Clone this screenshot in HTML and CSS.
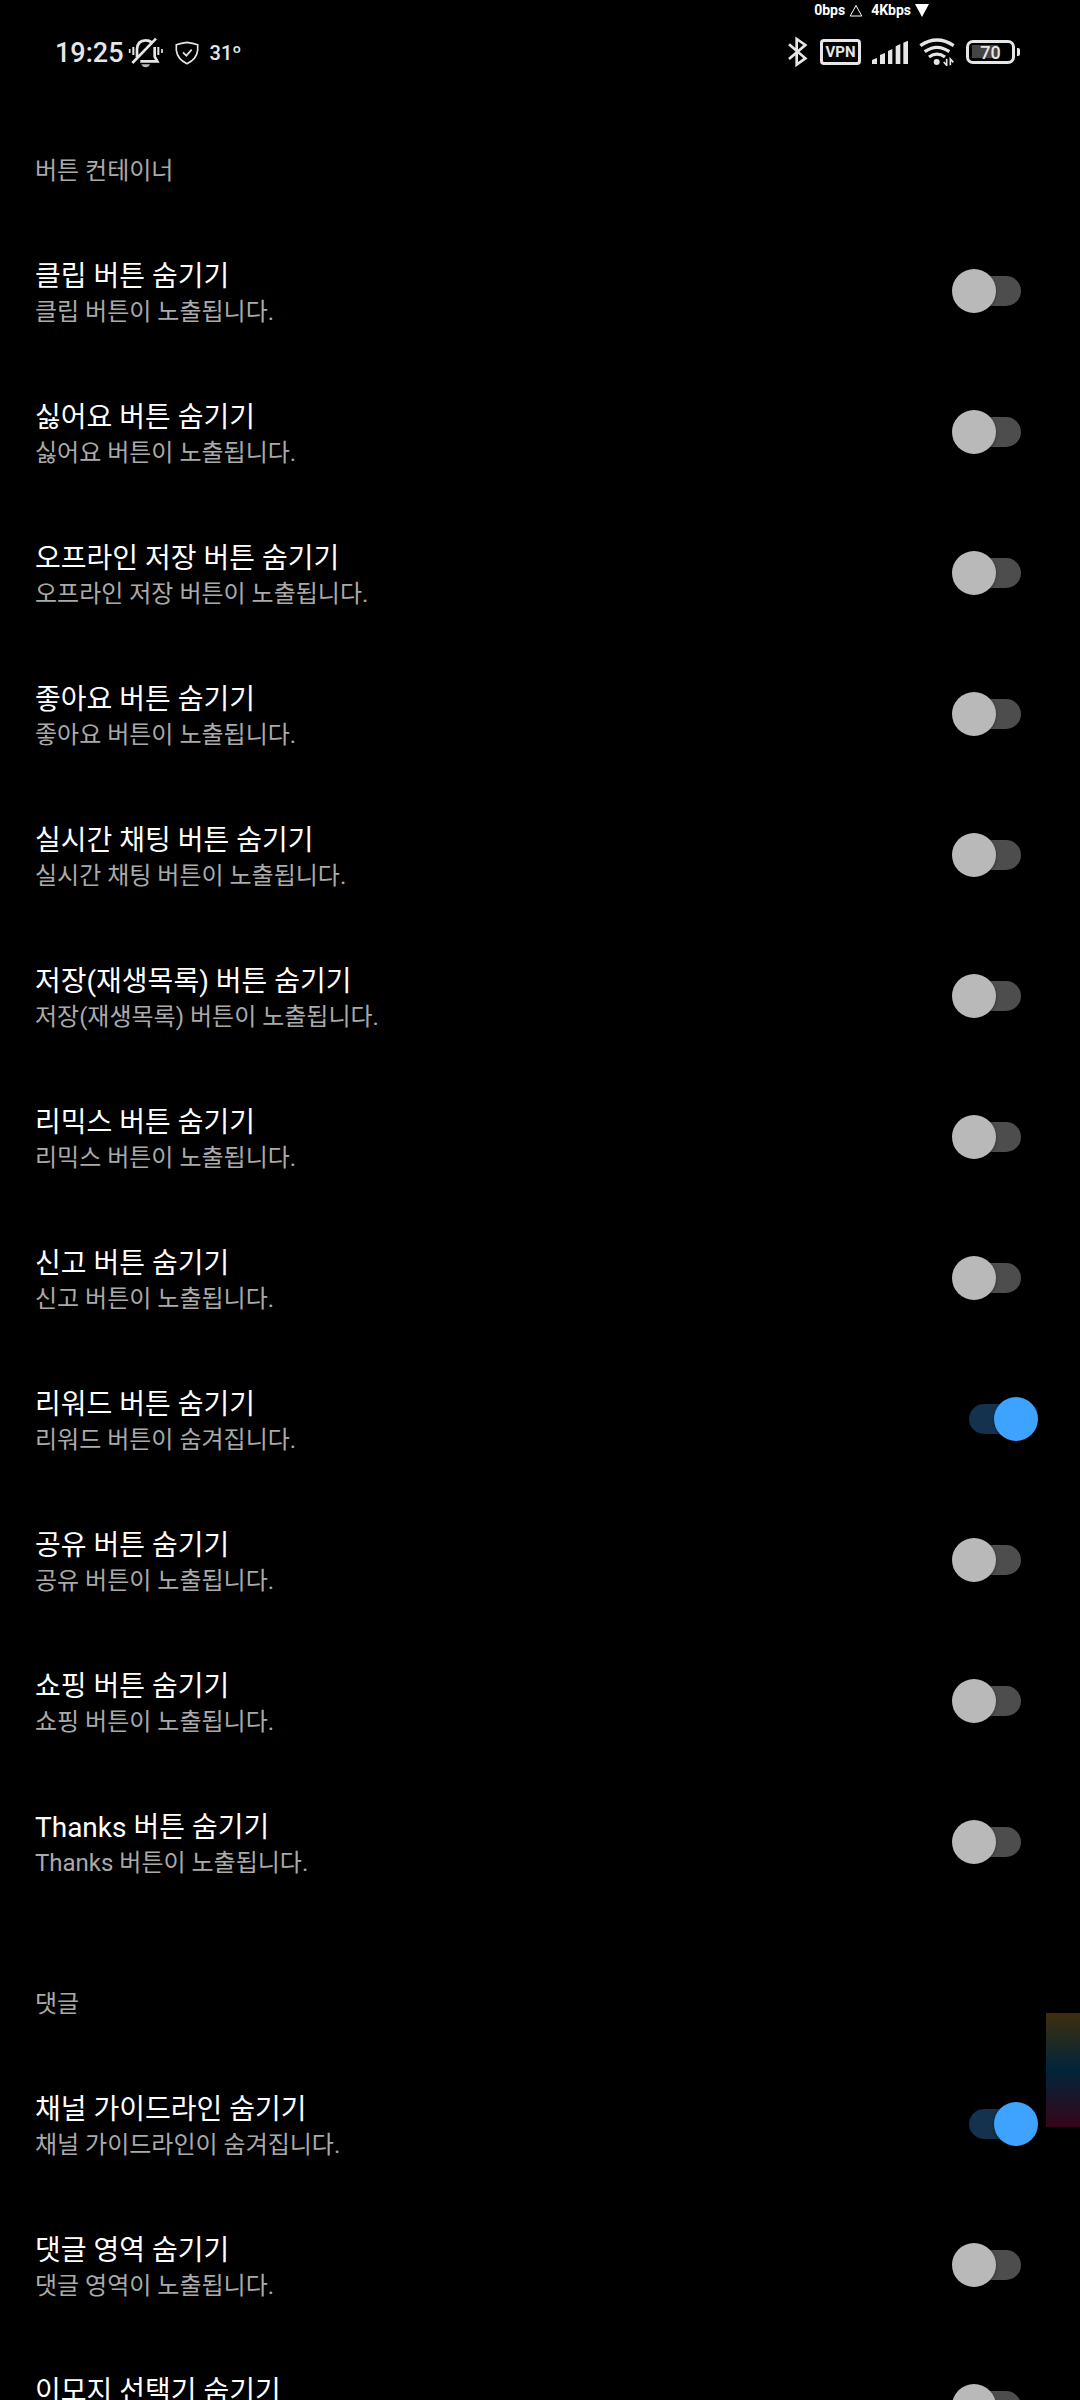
FILE: index.html
```
<!DOCTYPE html>
<html lang="ko">
<head>
    <meta charset="UTF-8">
    <meta name="viewport" content="width=device-width, initial-scale=1.0">
    <title>버튼 컨테이너</title>
    <link rel="stylesheet" href="styles.css">
</head>
<body>
<header class="statusbar">
    <div class="netspeed">
        <span>0bps</span>
        <svg width="14" height="13" viewBox="0 0 14 13"><path d="M7 1.5 12.8 12H1.2Z" fill="none" stroke="#fff"/></svg>
        <span class="down">4Kbps</span>
        <svg width="14" height="13" viewBox="0 0 14 13"><path d="M0 0h14L7 13Z" fill="#fff"/></svg>
    </div>
    <div class="status-row">
        <div class="status-left">
            <span class="clock">19:25</span>
            <!-- muted bell -->
            <svg width="36" height="32" viewBox="262 50 108 96" fill="none" stroke="#e6e6e6" stroke-width="8">
                <path d="M289 110V87Q290 60 315 60Q326 60 333 66M342 80V109L350 123H299M275 128 346 55"/>
                <path d="M278 80V104M353 80V104" stroke-width="6"/>
                <path d="M267 86V98M364 86V98" stroke-width="5"/>
                <path d="M302 132H328Q324 141 315 141Q306 141 302 132Z" fill="#bbb" stroke="none"/>
            </svg>
            <svg class="shield" width="26" height="28" viewBox="402 54 78 84" fill="none" stroke="#e6e6e6" stroke-width="5">
                <path d="M441 64Q458 66 473 71V88Q470 114 441 128Q412 114 409 88V71Q424 66 441 64Z"/>
                <path d="M429 94 439 104 455 86"/>
            </svg>
            <span class="temp">31º</span>
        </div>
        <div class="status-right">
            <!-- bluetooth -->
            <svg width="22" height="32" viewBox="54 108 66 96" fill="none" stroke="#e6e6e6" stroke-width="8">
                <path d="M60 133 109 175 83 194V117L109 135 60 177"/>
            </svg>
            <span class="vpn">VPN</span>
            <!-- signal -->
            <svg width="36" height="24" viewBox="306 120 108 72" fill="#e6e6e6">
                <path d="M306 192V180L321 174V192ZM330 192V165L345 159V192ZM354 192V153L367 147V192ZM377 192V139L391 132V192ZM400 192V128L414 122V192Z"/>
            </svg>
            <!-- wifi -->
            <svg width="36" height="28" viewBox="444 114 108 84" fill="none" stroke="#e6e6e6" stroke-width="10">
                <path d="M448 137Q498 103 548 137M461 155Q498 129 535 155M474 171Q498 154 522 171"/>
                <circle cx="497" cy="186" r="9" fill="#e6e6e6" stroke="none"/>
                <path d="M527 176V196L518 186M538 196V177L547 187" stroke-width="5"/>
            </svg>
            <span class="battery"><span class="battery-body">70</span></span>
        </div>
    </div>
</header>
<main id="settings"></main>
<div class="edge-strip"></div>
<script>
    const sections = [
        {
            name: "버튼 컨테이너",
            items: [
                ["클립 버튼 숨기기", "클립 버튼이 노출됩니다."],
                ["싫어요 버튼 숨기기", "싫어요 버튼이 노출됩니다."],
                ["오프라인 저장 버튼 숨기기", "오프라인 저장 버튼이 노출됩니다."],
                ["좋아요 버튼 숨기기", "좋아요 버튼이 노출됩니다."],
                ["실시간 채팅 버튼 숨기기", "실시간 채팅 버튼이 노출됩니다."],
                ["저장(재생목록) 버튼 숨기기", "저장(재생목록) 버튼이 노출됩니다."],
                ["리믹스 버튼 숨기기", "리믹스 버튼이 노출됩니다."],
                ["신고 버튼 숨기기", "신고 버튼이 노출됩니다."],
                ["리워드 버튼 숨기기", "리워드 버튼이 숨겨집니다.", true],
                ["공유 버튼 숨기기", "공유 버튼이 노출됩니다."],
                ["쇼핑 버튼 숨기기", "쇼핑 버튼이 노출됩니다."],
                ["Thanks 버튼 숨기기", "Thanks 버튼이 노출됩니다."]
            ]
        },
        {
            name: "댓글",
            items: [
                ["채널 가이드라인 숨기기", "채널 가이드라인이 숨겨집니다.", true],
                ["댓글 영역 숨기기", "댓글 영역이 노출됩니다."],
                ["이모지 선택기 숨기기", ""]
            ]
        }
    ];

    document.getElementById("settings").innerHTML = sections.map(section => `
        <section>
            <h2 class="category">${section.name}</h2>
            ${section.items.map(([title, summary, on]) => `
            <label class="setting">
                <span class="setting-text">
                    <span class="title">${title}</span>
                    <span class="summary">${summary}</span>
                </span>
                <input type="checkbox" role="switch" class="switch" ${on ? "checked" : ""}>
            </label>`).join("")}
        </section>`).join("");
</script>
</body>
</html>
```
FILE: styles.css
```
* {
    box-sizing: border-box;
}

body {
    margin: 0;
    height: 100vh;
    overflow: hidden;
    background-color: #000;
    color: #fff;
    font-family: Roboto, "Noto Sans CJK KR", sans-serif;
}

svg {
    display: block;
}

.netspeed {
    display: flex;
    justify-content: flex-end;
    align-items: center;
    gap: 4px;
    height: 24px;
    padding: 0 151px 4px 0;
    font-size: 14px;
    font-weight: 700;
    line-height: 20px;
}

.netspeed .down {
    margin-left: 4px;
}

.status-row {
    display: flex;
    justify-content: space-between;
    align-items: center;
    height: 55px;
    padding: 0 60px 0 55px;
    color: #e6e6e6;
}

.status-left {
    display: flex;
    align-items: center;
    gap: 4px;
    padding-top: 2px;
}

.status-right {
    display: flex;
    align-items: center;
    gap: 11px;
}

.clock {
    font-size: 27px;
    font-weight: 500;
}

.shield {
    margin: 0 6px;
}

.temp {
    font-size: 20px;
    font-weight: 500;
}

.vpn {
    width: 41px;
    height: 26px;
    border: 3px solid #e6e6e6;
    border-radius: 4px;
    font-size: 15px;
    font-weight: 700;
    line-height: 20px;
    text-align: center;
}

.battery {
    display: flex;
    align-items: center;
    gap: 2px;
}

.battery::after {
    content: "";
    width: 3px;
    height: 8px;
    border-radius: 0 2px 2px 0;
    background-color: #e6e6e6;
}

.battery-body {
    width: 49px;
    height: 24px;
    border: 3px solid #e6e6e6;
    border-radius: 7px;
    background: linear-gradient(#444, #444) 3px 50% / 26px 13px no-repeat;
    font-size: 18px;
    font-weight: 500;
    line-height: 19px;
    text-align: center;
}

.category {
    height: 141px;
    margin: 0;
    padding: 75px 35px 0;
    color: #aaa;
    font-size: 24px;
    font-weight: 400;
    line-height: 34px;
}

.setting {
    display: flex;
    justify-content: space-between;
    align-items: center;
    height: 141px;
    padding: 0 59px 0 35px;
}

.setting-text {
    display: flex;
    flex-direction: column;
    align-self: flex-start;
    padding-top: 39px;
}

.title {
    font-size: 28px;
    line-height: 36px;
}

.summary {
    color: #aaa;
    font-size: 24px;
    line-height: 34px;
}

.switch {
    appearance: none;
    position: relative;
    width: 52px;
    height: 30px;
    margin: 0;
    border-radius: 15px;
    background-color: #4d4d4d;
}

.switch::before {
    content: "";
    position: absolute;
    top: -7px;
    left: -17px;
    width: 44px;
    height: 44px;
    border-radius: 50%;
    background-color: #b9b9b9;
    box-shadow: 0 1px 3px rgba(0, 0, 0, 0.4);
}

.switch:checked {
    background-color: #14324d;
}

.switch:checked::before {
    left: 25px;
    background-color: #3ea2ff;
}

/* translucent handle on the screen edge */
.edge-strip {
    position: absolute;
    top: 2013px;
    right: 0;
    width: 34px;
    height: 114px;
    background: linear-gradient(#3f2e0d, #00253a 50%, #350518);
}
```
